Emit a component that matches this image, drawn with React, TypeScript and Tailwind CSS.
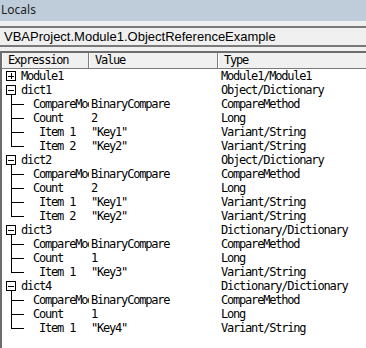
type Row = {
  kind: "closed" | "open" | "child" | "last"
  name: string
  value?: string
  type: string
}

const rows: Row[] = [
  { kind: "closed", name: "Module1", type: "Module1/Module1" },
  { kind: "open", name: "dict1", type: "Object/Dictionary" },
  { kind: "child", name: "CompareMode", value: "BinaryCompare", type: "CompareMethod" },
  { kind: "child", name: "Count", value: "2", type: "Long" },
  { kind: "child", name: " Item 1", value: "\"Key1\"", type: "Variant/String" },
  { kind: "last", name: " Item 2", value: "\"Key2\"", type: "Variant/String" },
  { kind: "open", name: "dict2", type: "Object/Dictionary" },
  { kind: "child", name: "CompareMode", value: "BinaryCompare", type: "CompareMethod" },
  { kind: "child", name: "Count", value: "2", type: "Long" },
  { kind: "child", name: " Item 1", value: "\"Key1\"", type: "Variant/String" },
  { kind: "last", name: " Item 2", value: "\"Key2\"", type: "Variant/String" },
  { kind: "open", name: "dict3", type: "Dictionary/Dictionary" },
  { kind: "child", name: "CompareMode", value: "BinaryCompare", type: "CompareMethod" },
  { kind: "child", name: "Count", value: "1", type: "Long" },
  { kind: "last", name: " Item 1", value: "\"Key3\"", type: "Variant/String" },
  { kind: "open", name: "dict4", type: "Dictionary/Dictionary" },
  { kind: "child", name: "CompareMode", value: "BinaryCompare", type: "CompareMethod" },
  { kind: "child", name: "Count", value: "1", type: "Long" },
  { kind: "last", name: " Item 1", value: "\"Key4\"", type: "Variant/String" },
]

function Tree({ kind }: { kind: Row["kind"] }) {
  if (kind === "closed" || kind === "open") {
    return (
      <svg width="17" height="14" className="shrink-0" shapeRendering="crispEdges">
        <rect x="2.5" y="2.5" width="9" height="9" fill="white" stroke="black" />
        <line x1="4" y1="7" x2="10" y2="7" stroke="black" />
        {kind === "closed" && <line x1="7" y1="4" x2="7" y2="10" stroke="black" />}
        {kind === "open" && <line x1="7" y1="12" x2="7" y2="14" stroke="black" />}
      </svg>
    )
  }
  return (
    <svg width="29" height="14" className="shrink-0" shapeRendering="crispEdges">
      <line x1="7" y1="0" x2="7" y2={kind === "last" ? 8 : 14} stroke="black" />
      <line x1="7" y1="7.5" x2="20" y2="7.5" stroke="black" />
    </svg>
  )
}

export default function App() {
  const mono = { fontFamily: '"DejaVu Sans Mono", monospace' }
  return (
    <div className="w-[366px] h-[348px] overflow-hidden bg-[#f0f0f0] flex flex-col">
      <div
        className="h-[21px] bg-[#bfcddb] px-[1px] pt-[3px] text-[12px] text-[#1e1e1e] leading-[14px]"
        style={{ fontFamily: '"Noto Sans", sans-serif' }}
      >
        Locals
      </div>
      <div className="h-[5px]" />
      <div
        className="h-[21px] border-t-2 border-b-2 border-[#7a7a7a] bg-[#f0f0f0] pl-[4px] text-[13px] leading-[17px] text-black"
        style={{ fontFamily: '"Liberation Sans", sans-serif' }}
      >
        VBAProject.Module1.ObjectReferenceExample
      </div>
      <div className="h-[4px]" />
      <div className="flex-1 flex flex-col border-l-2 border-t-2 border-[#6d6d6d] bg-white min-h-0">
        <div
          className="h-[16px] grid grid-cols-[87px_129px_1fr] bg-[#f0f0f0] border-b border-[#7a7a7a] text-[12px] leading-[15px] tracking-[-1.2px] text-black"
          style={mono}
        >
          <div className="pl-[5px] border-l border-white border-r border-r-[#808080]">Expression</div>
          <div className="pl-[5px] border-l border-white border-r border-r-[#808080]">Value</div>
          <div className="pl-[5px] border-l border-white">Type</div>
        </div>
        <div className="flex flex-col text-[12px] leading-[14px] tracking-[-1.2px] text-black" style={mono}>
          {rows.map((r, i) => (
            <div key={i} className="h-[14px] grid grid-cols-[87px_129px_1fr] whitespace-pre">
              <div className="flex items-center overflow-hidden pl-[2px]">
                <Tree kind={r.kind} />
                <span>{r.name}</span>
              </div>
              <div className="pl-[2px] overflow-hidden">{r.value ?? ""}</div>
              <div className="pl-[3px] overflow-hidden">{r.type}</div>
            </div>
          ))}
        </div>
      </div>
    </div>
  )
}
